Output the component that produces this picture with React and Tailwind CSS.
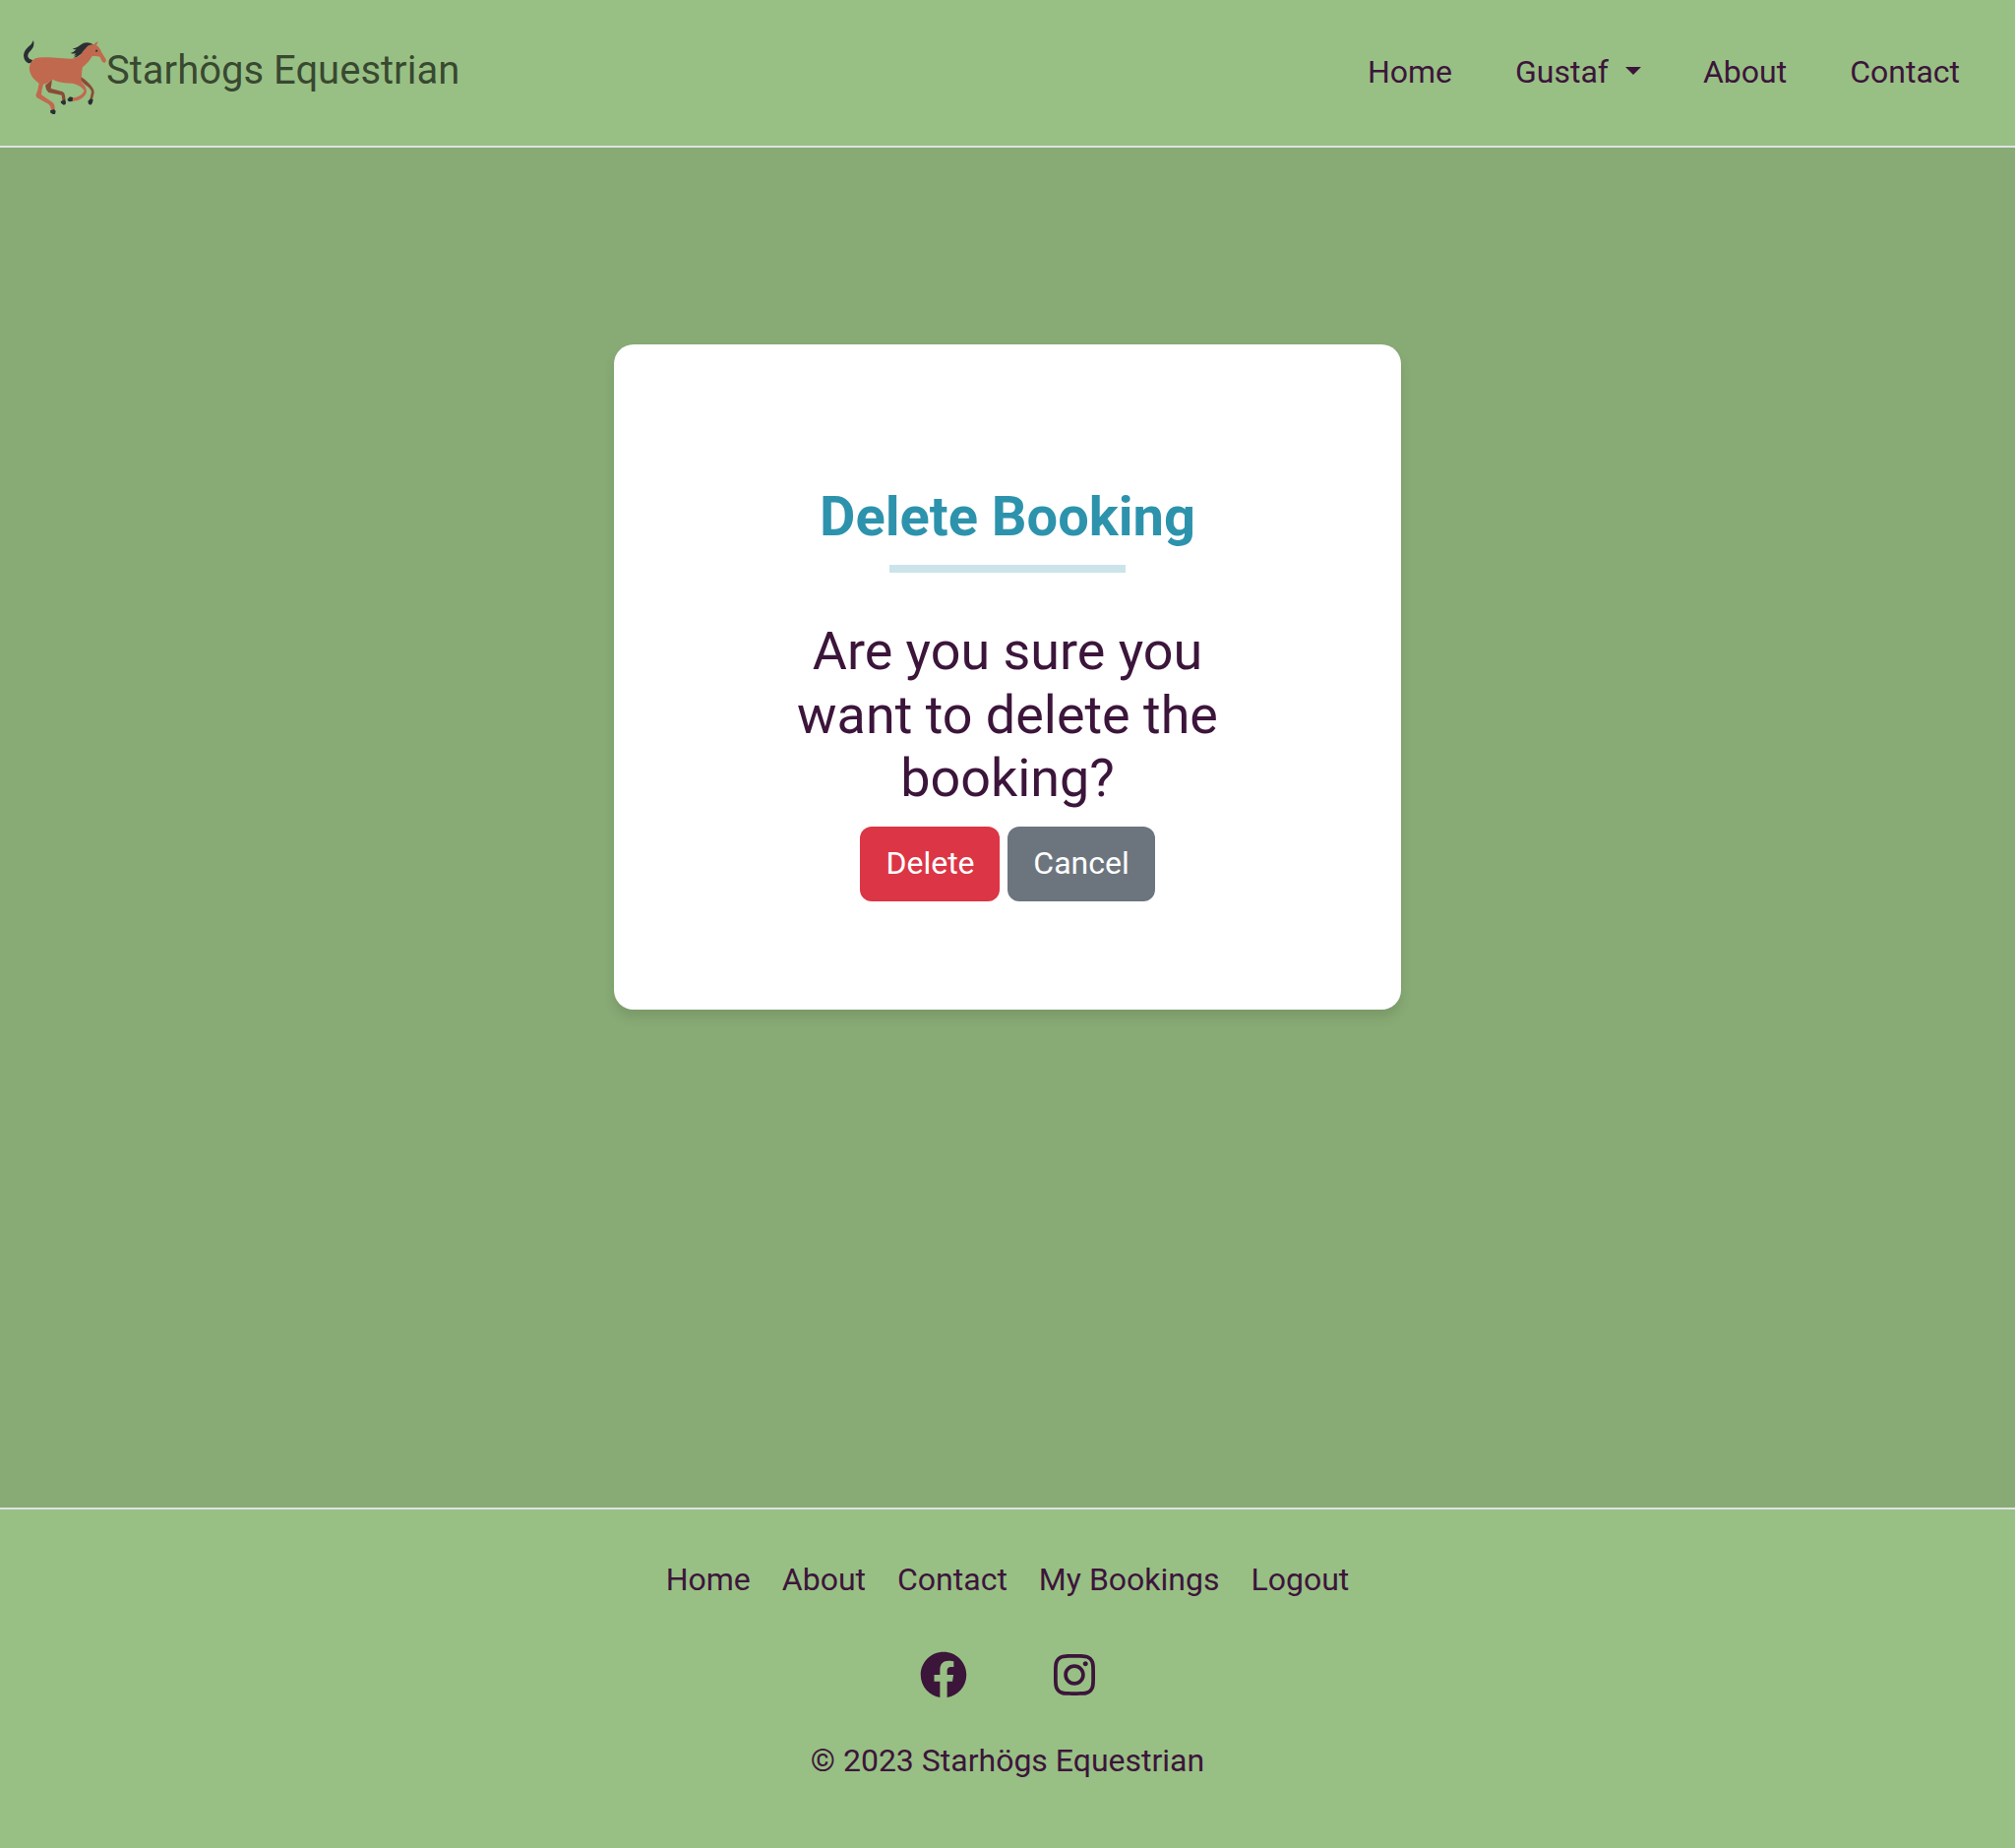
import React from "react";

const navLinks = ["Home", "Gustaf", "About", "Contact"];
const footerLinks = ["Home", "About", "Contact", "My Bookings", "Logout"];

function Horse() {
  return (
    <svg className="block h-[80px] w-[88px]" viewBox="60 48 264 240" aria-hidden="true">
      <path d="M247 174Q258 181 270 193Q288 211 287 223L282 243L274 243L279 220Q277 209 262 200Q247 190 243 178Z" fill="#8a4b38" />
      <path d="M138 200L159 182L155 210L190 219Q197 222 198 231L200 246L190 246L188 230L148 222Q139 214 138 200Z" fill="#8a4b38" />
      <path d="M102 63Q98 74 85 84Q73 95 72 109Q73 127 85 132Q92 134 97 130L99 123Q89 122 85 113Q84 102 93 95Q107 81 102 63Z" fill="#292f33" />
      <path d="M287 77Q264 63 245 77Q231 88 221 87Q226 92 233 91Q225 99 215 102Q223 105 232 103L225 110L234 109L223 116Q237 115 246 106Q260 95 272 82Z" fill="#292f33" />
      <path d="M298 67Q289 70 287 76Q271 74 264 84Q251 97 246 107Q232 118 215 119L150 115Q118 113 108 118Q91 127 89 148Q91 173 113 190L119 194Q117 212 109 230Q110 237 118 241L148 257Q155 262 156 275L167 275Q168 257 159 251L126 229Q127 212 132 197Q148 194 159 182Q183 194 222 194Q246 200 256 215Q257 222 244 231Q232 239 221 238L220 248Q238 249 249 240Q263 229 264 219Q264 207 251 193Q245 186 249 171Q249 155 252 145Q271 129 279 115Q280 110 286 111Q296 110 305 114Q310 130 318 132Q325 129 323 121L309 98Q304 83 293 77Q299 73 298 67Z" fill="#c1694f" />
      <path d="M292 92L297 92L298 97L293 98L291 95Z" fill="#292f33" />
      <path d="M153 277L165 273L170 279L168 288L160 288L154 283Z" fill="#292f33" />
      <path d="M185 249L197 244L201 250L200 258L194 260L186 254Z" fill="#292f33" />
      <path d="M206 242L213 235L222 237L221 249L210 250L206 246Z" fill="#292f33" />
      <path d="M268 248L276 241L284 244L282 253L277 260L270 257Z" fill="#292f33" />
    </svg>
  );
}

function Facebook() {
  return (
    <svg className="size-12" viewBox="0 0 512 512" fill="currentColor" aria-hidden="true">
      <path d="M504 256C504 119 393 8 256 8S8 119 8 256c0 123.78 90.69 226.38 209.25 245V327.69h-63V256h63v-54.64c0-62.15 37-96.48 93.67-96.48 27.14 0 55.52 4.84 55.52 4.84v61h-31.28c-30.8 0-40.41 19.12-40.41 38.73V256h68.78l-11 71.69h-57.78V501C413.31 482.38 504 379.78 504 256z" />
    </svg>
  );
}

function Instagram() {
  return (
    <svg className="h-12 w-[42px]" viewBox="0 0 448 512" fill="currentColor" aria-hidden="true">
      <path d="M224.1 141c-63.6 0-114.9 51.3-114.9 114.9s51.3 114.9 114.9 114.9S339 319.5 339 255.9 287.7 141 224.1 141zm0 189.6c-41.1 0-74.7-33.5-74.7-74.7s33.5-74.7 74.7-74.7 74.7 33.5 74.7 74.7-33.6 74.7-74.7 74.7zm146.4-194.3c0 14.9-12 26.8-26.8 26.8-14.9 0-26.8-12-26.8-26.8s12-26.8 26.8-26.8 26.8 12 26.8 26.8zm76.1 27.2c-1.7-35.9-9.9-67.7-36.2-93.9-26.2-26.2-58-34.4-93.9-36.2-37-2.1-147.9-2.1-184.9 0-35.8 1.7-67.6 9.9-93.9 36.1s-34.4 58-36.2 93.9c-2.1 37-2.1 147.9 0 184.9 1.7 35.9 9.9 67.7 36.2 93.9s58 34.4 93.9 36.2c37 2.1 147.9 2.1 184.9 0 35.9-1.7 67.7-9.9 93.9-36.2 26.2-26.2 34.4-58 36.2-93.9 2.1-37 2.1-147.8 0-184.8zM398.8 388c-7.8 19.6-22.9 34.7-42.6 42.6-29.5 11.7-99.5 9-132.1 9s-102.7 2.6-132.1-9c-19.6-7.8-34.7-22.9-42.6-42.6-11.7-29.5-9-99.5-9-132.1s-2.6-102.7 9-132.1c7.8-19.6 22.9-34.7 42.6-42.6 29.5-11.7 99.5-9 132.1-9s102.7-2.6 132.1 9c19.6 7.8 34.7 22.9 42.6 42.6 11.7 29.5 9 99.5 9 132.1s2.7 102.7-9 132.1z" />
    </svg>
  );
}

export default function App() {
  return (
    <div className="flex h-[1878px] w-full flex-col bg-[#88ab75] font-['Roboto',sans-serif] text-[32px] leading-[48px] text-[#3c153b]">
      <header className="flex h-[150px] shrink-0 items-start justify-between border-b-2 border-[#dee2e6] bg-[#98c084] pl-5 pr-[56px]">
        <a className="flex text-[40px] text-black/65" href="#">
          <span className="mt-9 block">
            <Horse />
          </span>
          <span className="mt-[42px] leading-[60px]">Starhögs Equestrian</span>
        </a>
        <nav className="mt-[49px] flex gap-16">
          {navLinks.map((label) => (
            <a key={label} href="#" className="flex items-center">
              {label}
              {label === "Gustaf" && (
                <span className="mr-[-1px] mb-[2px] ml-[17px] h-0 w-0 border-x-8 border-t-8 border-x-transparent border-t-[#3c153b]" />
              )}
            </a>
          ))}
        </nav>
      </header>

      <main className="flex flex-1 flex-col items-center pt-[200px]">
        <section className="flex h-[676px] w-[800px] flex-col items-center rounded-[20px] bg-white shadow-[0_8px_12px_rgba(0,0,0,0.1)]">
          <h1 className="mt-[142px] text-[56px] leading-[67px] font-bold text-[#2d93ad]">Delete Booking</h1>
          <div className="mt-[15px] h-2 w-60 bg-[#cbe4e9]" />
          <p className="mt-[48px] w-[460px] text-center text-[53.888px] leading-[64.667px]">
            Are you sure you want to delete the booking?
          </p>
          <div className="mt-[16px] flex gap-2 text-white">
            <button className="h-[76px] w-[142px] rounded-xl bg-[#dc3545] pb-[2px] pl-px">Delete</button>
            <button className="h-[76px] w-[150px] rounded-xl bg-[#6c757d] pb-[2px]">Cancel</button>
          </div>
        </section>
      </main>

      <footer className="flex h-[346px] shrink-0 flex-col items-center border-t-2 border-[#dee2e6] bg-[#98c084]">
        <nav className="mt-[47px] flex gap-8">
          {footerLinks.map((label) => (
            <a key={label} href="#">
              {label}
            </a>
          ))}
        </nav>
        <div className="mt-[49px] flex gap-[88px]">
          <a href="#" aria-label="Facebook">
            <Facebook />
          </a>
          <a href="#" aria-label="Instagram">
            <Instagram />
          </a>
        </div>
        <p className="mt-[39px]">© 2023 Starhögs Equestrian</p>
      </footer>
    </div>
  );
}
